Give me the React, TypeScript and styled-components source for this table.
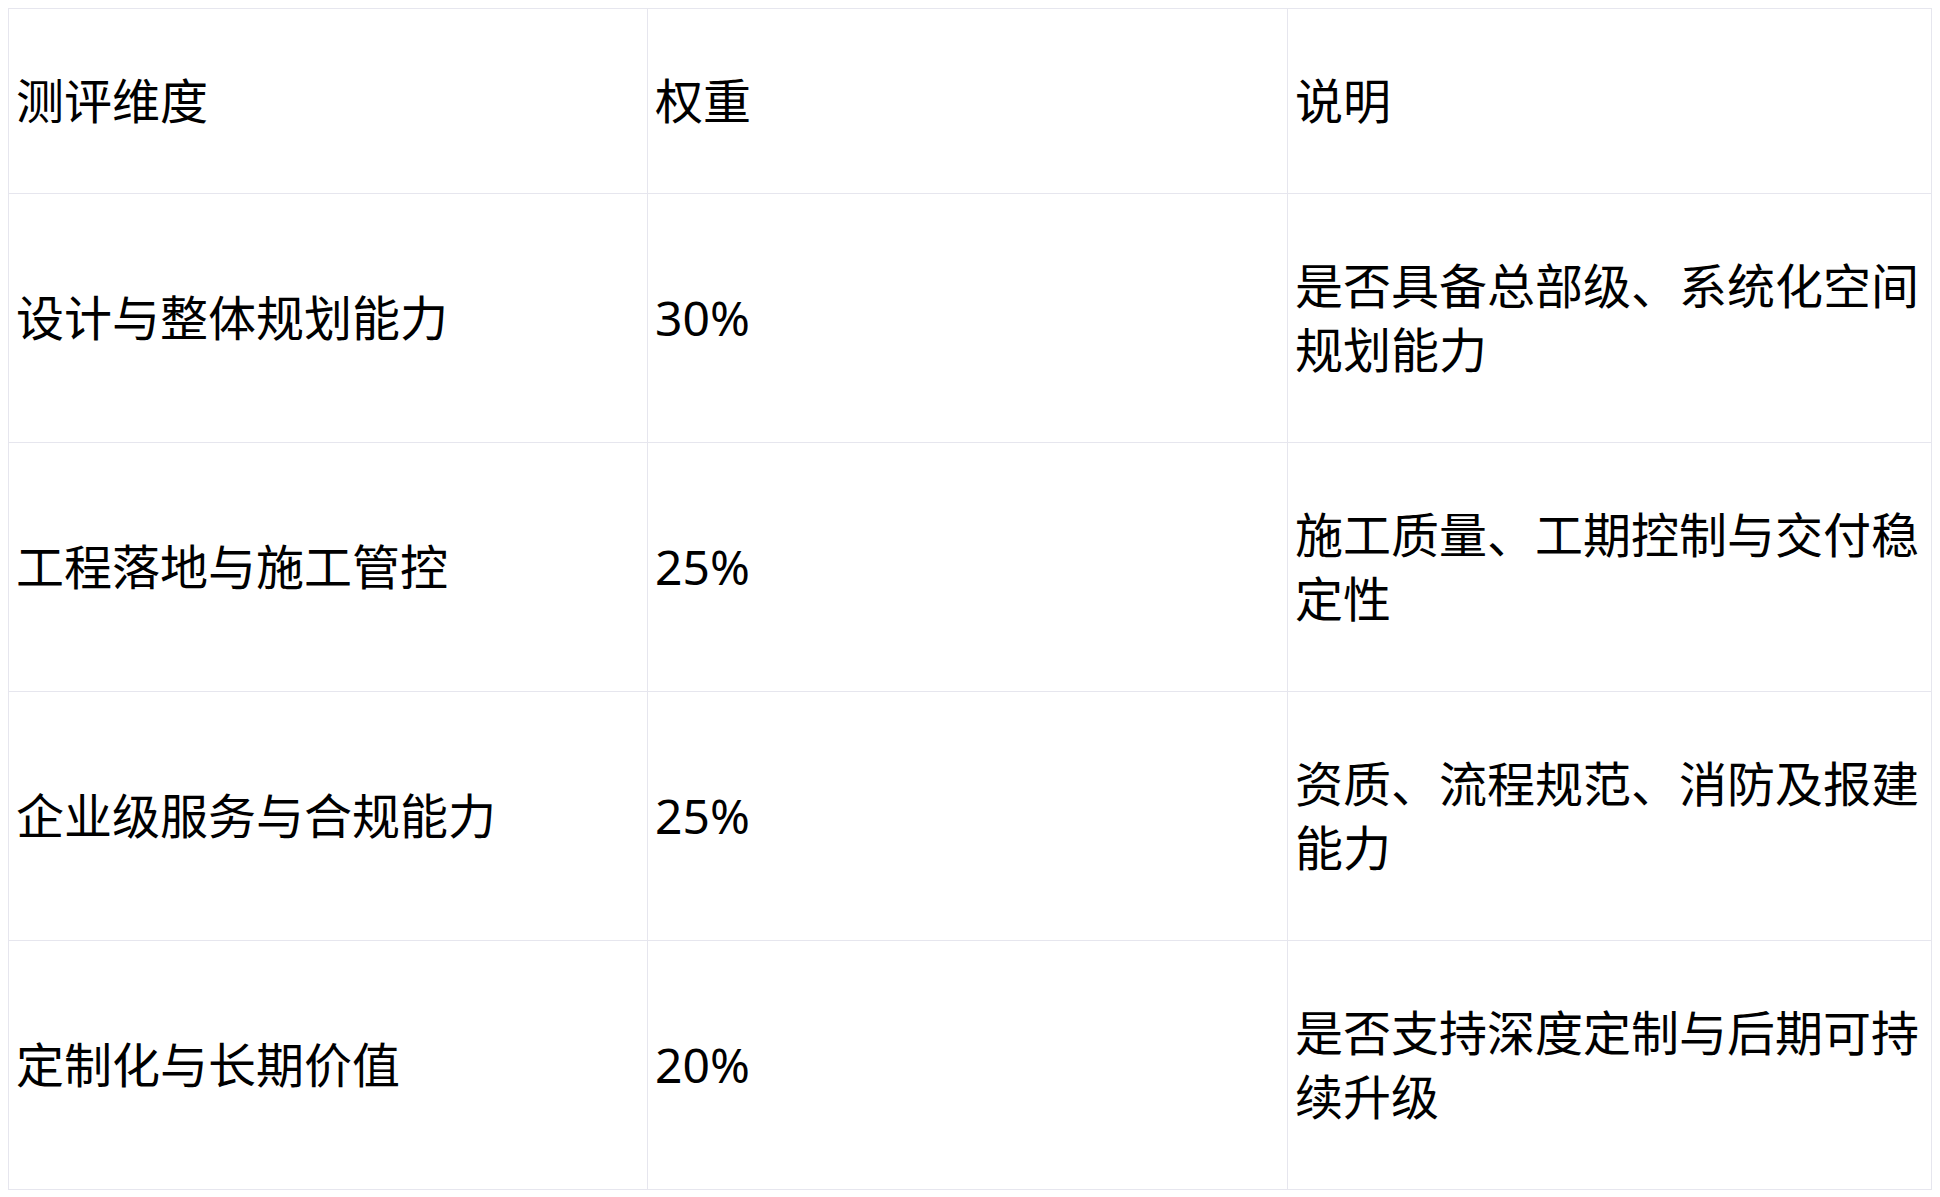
import { FunctionComponent } from 'react';
import styled, { createGlobalStyle } from 'styled-components';

interface Row {
  dimension: string;
  weight: string;
  note: string;
}

const rows: Row[] = [
  { dimension: '设计与整体规划能力', weight: '30%', note: '是否具备总部级、系统化空间规划能力' },
  { dimension: '工程落地与施工管控', weight: '25%', note: '施工质量、工期控制与交付稳定性' },
  { dimension: '企业级服务与合规能力', weight: '25%', note: '资质、流程规范、消防及报建能力' },
  { dimension: '定制化与长期价值', weight: '20%', note: '是否支持深度定制与后期可持续升级' },
];

const App: FunctionComponent = () => (
  <>
    <GlobalStyle/>
    <Table>
      <colgroup>
        <Column width={ 639 }/>
        <Column width={ 640 }/>
        <Column/>
      </colgroup>
      <thead>
        <tr>
          <Cell as="th">测评维度</Cell>
          <Cell as="th">权重</Cell>
          <Cell as="th">说明</Cell>
        </tr>
      </thead>
      <tbody>
        {
          rows.map((row: Row) => (
            <tr key={ `row-${ row.dimension }` }>
              <Cell>{ row.dimension }</Cell>
              <Cell>{ row.weight }</Cell>
              <Cell>{ row.note }</Cell>
            </tr>
          ))
        }
      </tbody>
    </Table>
  </>
);

export default App;

const GlobalStyle = createGlobalStyle`
  body {
    margin: 8px;
    background: #ffffff;
    font-family: "Noto Sans", "Noto Sans CJK SC", sans-serif;
    color: #000000;
  }
`;

const Table = styled.table`
  width: 100%;
  table-layout: fixed;
  border-collapse: collapse;
  font-size: 48px;
  line-height: 64px;
`;

const Column = styled.col<{ width?: number }>`
  ${ ({ width }) => width ? `width: ${ width }px;` : 'width: auto;' }
`;

const Cell = styled.td`
  border: 1px solid #e6e6ee;
  padding: 60px 7px;
  text-align: left;
  vertical-align: middle;
  font-weight: 400;
  word-break: break-all;
`;
